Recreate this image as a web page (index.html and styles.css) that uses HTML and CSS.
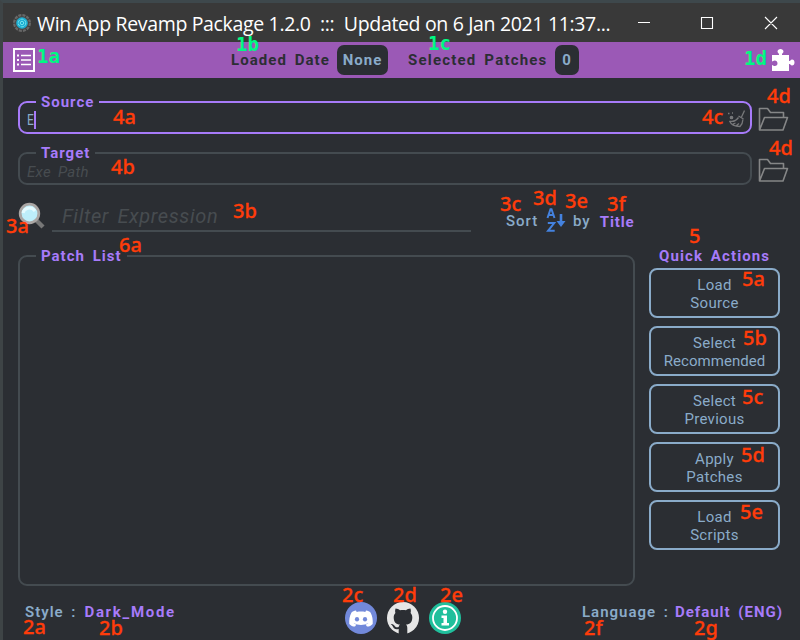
FILE: index.html
```html
<!DOCTYPE html>
<html lang="en">
<head>
<meta charset="utf-8">
<title>Win App Revamp Package</title>
<link rel="stylesheet" href="styles.css">
</head>
<body>
<div class="window">
  <header class="titlebar">
    <svg class="app-icon" viewBox="0 0 18 18"><circle cx="9" cy="9" r="7.8" fill="none" stroke="#686868" stroke-width="2.4" stroke-dasharray="3.1 1"/><circle cx="9" cy="9" r="6.8" fill="#4b4b4b"/><circle cx="9" cy="9" r="5.8" fill="#1caed2"/><circle cx="9" cy="9" r="3.8" fill="none" stroke="#73e2ef" stroke-dasharray="3 1"/><circle cx="9" cy="9" r="1.7" fill="none" stroke="#73e2ef"/></svg>
    <span class="app-title">Win App Revamp Package 1.2.0 &nbsp;::: &nbsp;Updated on 6 Jan 2021 11:37...</span>
    <svg class="controls" viewBox="0 0 140 14"><path d="M0 6.500h12M63.500 1.500h11v11h-11zM127 1l12 12M139 1L127 13" fill="none" stroke="#fff" stroke-width="1.1"/></svg>
  </header>
  <div class="toolbar">
    <svg class="menu-icon" viewBox="0 0 22 24"><path d="M1 1h20v22H1z" fill="none" stroke="#fff" stroke-width="2"/><path d="M8 7.500h10M8 12h10M8 16.500h10" stroke="#fff" stroke-width="1.5"/><path d="M4 7.500h2M4 12h2M4 16.500h2" stroke="#fff" stroke-width="2"/></svg>
    <span class="bar-label loaded">Loaded Date</span><span class="chip none">None</span>
    <span class="bar-label selected">Selected Patches</span><span class="chip zero">0</span>
    <svg class="puzzle" viewBox="0 0 24 23"><path fill="#fff" d="M1 6h7C8.500 4.500 6.500 4 6.500 2.700 6.500 1 8 0 9.500 0s3 1 3 2.700C12.500 4 10.500 4.500 11 6h7v6c1.500.5 1.500-1.500 3-1.500 1.700 0 2.500 1.300 2.500 3s-1 3-2.500 3-1.500-2-3-1.500v7H1v-6c1 .3 1.300 1 2.800 1 1.700 0 2.700-1 2.700-2.700s-1.200-2.800-2.800-2.800c-1.400 0-1.700.8-2.700 1z"/></svg>
  </div>
  <main class="content">
    <div class="path-row">
      <div class="group active"><span class="legend source">Source</span><span class="typed">E</span><span class="caret"></span>
        <svg class="broom" viewBox="0 0 18 18" fill="none" stroke="#77787a" stroke-width="1.300"><path d="M17.500 .5L14.500 7M11.500 6l5 3M2.500 11c3.500 1 6.500 0 9-3.500M2.500 11c1.500 3.500 5 5.500 10.500 5.500 2-2 3-4 2.800-7M6 14l2.500-1M9.500 15.500l2.500-2"/><circle cx="4.500" cy="7.500" r="1.200" fill="#77787a"/><path d="M1 3.500h1.500M5 3h1"/></svg>
      </div>
      <svg class="folder" viewBox="0 0 31 25"><path d="M1.500 23V1.500h8l3 4h13v5M1.500 23l5-12.500h23L25 23z" fill="none" stroke="#858687" stroke-width="1.600" stroke-linejoin="round"/></svg>
    </div>
    <div class="path-row">
      <div class="group"><span class="legend target">Target</span><span class="hint">Exe Path</span></div>
      <svg class="folder" viewBox="0 0 31 25"><path d="M1.500 23V1.500h8l3 4h13v5M1.500 23l5-12.500h23L25 23z" fill="none" stroke="#858687" stroke-width="1.600" stroke-linejoin="round"/></svg>
    </div>
    <div class="filter-row">
      <svg class="search" viewBox="0 0 28 28"><path d="M17 17l8 8" stroke="#777" stroke-width="4.500"/><circle cx="11.500" cy="11.500" r="9.300" fill="#bdeefa" stroke="#aaa6a4" stroke-width="2.800"/><path d="M5 11c1-5 8-7 12-2" fill="none" stroke="#e5fbff" stroke-width="3"/></svg>
      <div class="filter"><span>Filter Expression</span></div>
      <div class="sort">
        <span class="word">Sort</span>
        <svg class="az" viewBox="0 0 20 25"><path d="M1.500 10L4.500 1.200h1L8.500 10M2.800 7h4.500M1.800 15h6.400L2 22.800h6.700" fill="none" stroke="#4482df" stroke-width="2"/><path d="M15 6v10" stroke="#4482df" stroke-width="2.600"/><path d="M10.500 13h9L15 19z" fill="#4482df"/></svg>
        <span class="word">by</span><span class="accent sort-key">Title</span>
      </div>
    </div>
    <div class="work">
      <section class="group patches"><span class="legend list">Patch List</span></section>
      <aside class="actions">
        <h2>Quick Actions</h2>
        <button>Load<br>Source</button>
        <button>Select<br><span class="wide">Recommended</span></button>
        <button>Select<br>Previous</button>
        <button>Apply<br>Patches</button>
        <button>Load<br>Scripts</button>
      </aside>
    </div>
  </main>
  <footer class="footer">
    <div class="setting style-set"><span>Style :</span><span class="accent mode">Dark_Mode</span></div>
    <div class="links">
      <svg viewBox="0 0 32 32"><circle cx="16" cy="16" r="16" fill="#7289da"/><path fill="#fff" d="M11 8.500c-2 .3-3.500 1-4.500 2C4.500 14 4 18 4.300 22c1.500 1.700 3.300 2.500 5.700 2.600l1.400-2c-1.200-.4-2-.9-2.800-1.600 4.500 2.500 10.300 2.500 14.800 0-.8.7-1.600 1.200-2.800 1.600l1.400 2c2.400-.1 4.200-.9 5.700-2.600.3-4-.2-8-2.200-11.500-1-1-2.500-1.700-4.500-2l-.7 1.400c-2.800-.5-5.800-.5-8.600 0z"/><ellipse cx="12" cy="17.300" rx="2.100" ry="2.300" fill="#7289da"/><ellipse cx="20" cy="17.300" rx="2.100" ry="2.300" fill="#7289da"/></svg>
      <svg viewBox="0 0 32 32"><circle cx="16" cy="16" r="16" fill="#e6e6e6"/><path fill="#2b2e33" d="M11.700 32v-5c-4 1-5.300-1-6-2.700-.5-1-1.200-1.600-2-2.200 2-.6 3.200.7 4 2 1 1.500 2.500 1.500 4 .9.200-1.200.7-1.900 1.300-2.400-4-.5-6.300-2.600-6.300-7.200 0-2 .6-3.400 1.700-4.500-.5-1.500-.3-3 .2-4.300 1.700 0 3.100.8 4.400 1.700 2-.5 4-.5 6 0 1.300-.9 2.700-1.700 4.400-1.700.5 1.300.7 2.800.2 4.300 1.100 1.100 1.700 2.500 1.700 4.500 0 4.600-2.300 6.700-6.300 7.200.9.800 1.300 2 1.300 3.500V32z"/></svg>
      <svg viewBox="0 0 32 32"><circle cx="16" cy="16" r="16" fill="#20bf9c"/><circle cx="16" cy="16" r="12" fill="none" stroke="#fff" stroke-width="1.800"/><circle cx="16" cy="9.800" r="2.200" fill="#fff"/><path fill="#fff" d="M12.500 13.500H18V21h2v2.500h-7.500V21h2v-5h-2z"/></svg>
    </div>
    <div class="setting lang-set"><span>Language :</span><span class="accent lang">Default (ENG)</span></div>
  </footer>
  <div class="notes">
    <b class="green n1a">1a</b><b class="green n1b">1b</b><b class="green n1c">1c</b><b class="green n1d">1d</b>
    <i class="n4a">4a</i><i class="n4b">4b</i><i class="n4c">4c</i><i class="n4d">4d</i><i class="n4e">4d</i>
    <i class="n3a">3a</i><i class="n3b">3b</i><i class="n3c">3c</i><i class="n3d">3d</i><i class="n3e">3e</i><i class="n3f">3f</i>
    <i class="n6a">6a</i><i class="n5">5</i><i class="n5a">5a</i><i class="n5b">5b</i><i class="n5c">5c</i><i class="n5d">5d</i><i class="n5e">5e</i>
    <i class="n2a">2a</i><i class="n2b">2b</i><i class="n2c">2c</i><i class="n2d">2d</i><i class="n2e">2e</i><i class="n2f">2f</i><i class="n2g">2g</i>
  </div>
</div>
</body>
</html>
```
FILE: styles.css
```css
* { box-sizing: border-box; }
body { margin: 0; background: #2b2e33; }
.window {
  position: relative; width: 800px; height: 640px; overflow: hidden;
  display: flex; flex-direction: column;
  border-top: 3px solid #3e484c; border-left: 3px solid #3e4446;
  background: #2b2e33; color: #8aabc9;
  font: 500 15px/18px Roboto, sans-serif; letter-spacing: 1px; word-spacing: 3px;
  white-space: nowrap;
}
svg { display: block; flex: none; }
.titlebar { height: 39px; flex: none; display: flex; align-items: center; padding-left: 10px; background: #393939; }
.app-icon { width: 18px; height: 18px; }
.app-title { width: 578px; margin-left: 6px; color: #fff; font: 19.5px/26px "Open Sans", sans-serif; letter-spacing: -.34px; word-spacing: 0; padding-top: 2px; }
.controls { width: 140px; height: 14px; margin-left: 23px; }
.toolbar { height: 36px; flex: none; display: flex; align-items: center; padding-left: 10px; background: #9b59b6; color: #2b2e33; }
.menu-icon { width: 22px; height: 24px; }
.bar-label { font-weight: 700; }
.loaded { width: 106px; margin-left: 196px; letter-spacing: 1.05px; }
.selected { width: 147px; margin-left: 20px; letter-spacing: 1.2px; }
.chip { height: 30px; border-radius: 7px; background: #2b2e33; color: #8aabc9; font-weight: 700; line-height: 31px; text-align: center; }
.none { width: 51px; }
.zero { width: 24px; }
.puzzle { width: 24px; height: 23px; margin-left: 192px; }
.content { padding: 23px 10px 0 15px; }
.path-row { display: flex; height: 33px; margin-bottom: 18px; }
.group { position: relative; border: 2px solid #444b50; border-radius: 9px; }
.path-row .group { width: 734px; display: flex; align-items: center; padding-left: 7px; }
.path-row .active { border-color: #a77bfa; }
.legend { position: absolute; top: -10px; left: 16px; height: 18px; padding-left: 5px; background: #2b2e33; color: #a77bfa; font-weight: 700; }
.source { width: 63px; }
.target { width: 59px; }
.list { width: 91px; }
.typed { font-size: 15px; font-weight: 400; letter-spacing: 0; padding-top: 4px; width: 7px; transform: scaleX(.8); transform-origin: left; }
.caret { width: 2px; height: 18px; margin-top: 4px; background: #a77bfa; }
.hint { color: #474c50; font-size: 15px; font-weight: 400; font-style: italic; letter-spacing: .3px; padding-top: 6px; }
.broom { width: 18px; height: 18px; margin-left: 691px; margin-top: 3px; }
.folder { width: 31px; height: 25px; margin: 6px 0 0 6px; }
.filter-row { display: flex; height: 52px; margin-top: -2px; }
.search { width: 28px; height: 28px; margin-top: 1px; }
.filter { width: 419px; height: 31px; margin-left: 6px; border-bottom: 2px solid #444b50; padding-left: 10px; color: #474c50; font-size: 20px; line-height: 30px; letter-spacing: .6px; font-style: italic; font-weight: 400; }
.sort { display: flex; margin-left: 35px; height: 38px; align-items: center; }
.word { padding-top: 2px; }
.word:first-child { width: 40px; }
.az { width: 20px; height: 25px; margin-right: 7px; }
.sort-key { margin-left: 9px; padding-top: 4px; letter-spacing: .9px; }
.accent { color: #a77bfa; font-weight: 700; }
.work { display: flex; }
.patches { width: 617px; height: 331px; margin-top: 2px; }
.actions { width: 131px; margin-left: 14px; margin-top: -6px; }
.actions h2 { margin: 0 0 3px 10px; height: 18px; font: 700 15px/18px Roboto, sans-serif; letter-spacing: 1.1px; color: #a77bfa; }
.actions button { display: block; width: 131px; height: 50px; margin: 0 0 8px; padding: 2px 0 0; border: 2px solid #8aabc9; border-radius: 8px; background: #2b2e33; color: #8aabc9; font: 400 15px/18px Roboto, sans-serif; letter-spacing: .3px; }
.wide { letter-spacing: .05px; }
.footer { position: relative; display: flex; height: 38px; margin-top: 17px; padding-left: 22px; }
.setting { display: flex; gap: 7px; font-weight: 600; }
.style-set { width: 320px; }
.style-set .mode { margin-left: 1px; letter-spacing: 1.7px; }
.links { display: flex; width: 116px; gap: 10px; margin-top: -1px; }
.links svg { width: 32px; height: 32px; }
.lang-set { margin-left: 121px; }
.lang-set .lang { margin-left: -1px; }
.notes { position: absolute; inset: -3px 0 0 -3px; pointer-events: none; }
.notes b, .notes i { position: absolute; font: 500 20px/24px "Noto Sans", sans-serif; letter-spacing: 0; color: #ff3c0a; -webkit-text-stroke: .3px #ff3c0a; }
.notes .green { color: #00f982; font: 700 19px/24px "DejaVu Sans Mono", monospace; letter-spacing: 0; -webkit-text-stroke: 0; }
.n1a { left: 37px; top: 44px; } .n1b { left: 236px; top: 32px; } .n1c { left: 428px; top: 31px; } .n1d { left: 744px; top: 46px; }
.n4a { left: 113px; top: 105px; } .n4b { left: 111px; top: 155px; } .n4c { left: 702px; top: 105px; } .n4d { left: 767px; top: 84px; } .n4e { left: 769px; top: 136px; }
.n3a { left: 6px; top: 214px; } .n3b { left: 233px; top: 199px; } .n3c { left: 500px; top: 192px; } .n3d { left: 533px; top: 186px; } .n3e { left: 565px; top: 189px; } .n3f { left: 607px; top: 192px; }
.n6a { left: 119px; top: 233px; } .n5 { left: 689px; top: 224px; }
.n5a { left: 742px; top: 267px; } .n5b { left: 743px; top: 326px; } .n5c { left: 742px; top: 385px; } .n5d { left: 741px; top: 443px; } .n5e { left: 740px; top: 500px; }
.n2a { left: 23px; top: 615px; } .n2b { left: 99px; top: 616px; } .n2c { left: 342px; top: 583px; } .n2d { left: 393px; top: 583px; } .n2e { left: 440px; top: 583px; } .n2f { left: 584px; top: 616px; } .n2g { left: 694px; top: 616px; }
```
